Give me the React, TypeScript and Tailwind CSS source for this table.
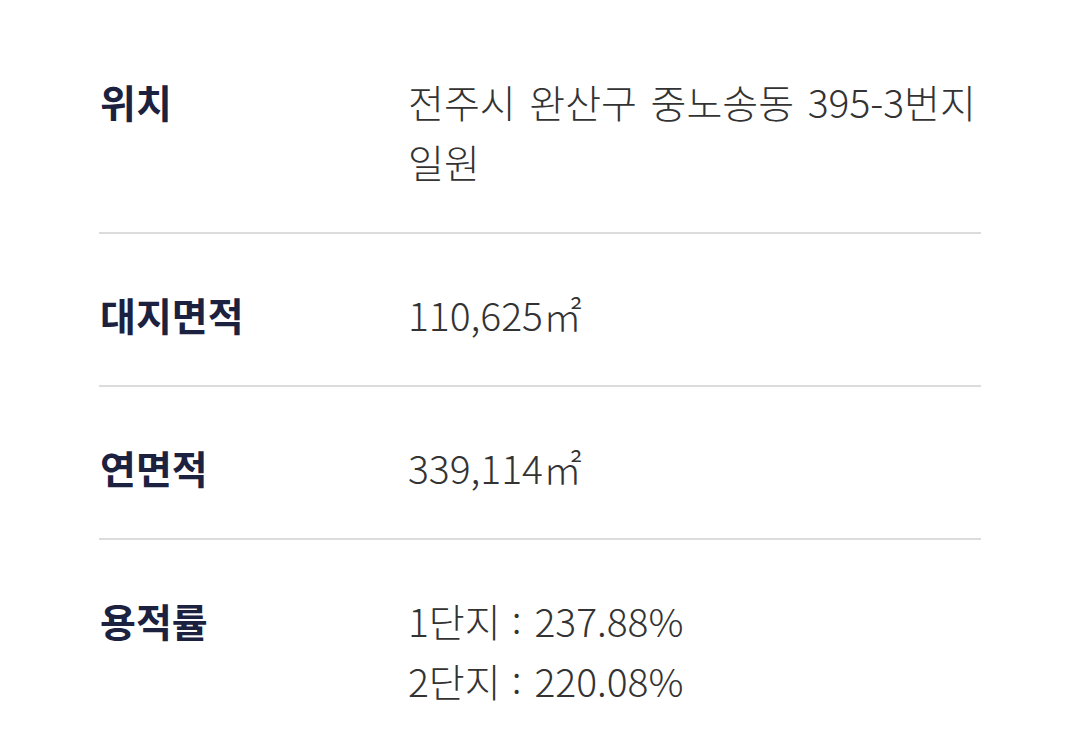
const Colon = () => <span className="ml-[11px] mr-[13px] inline-block -translate-y-[3px]">:</span>;

const rows: { label: string; lines: React.ReactNode[] }[] = [
  { label: "위치", lines: ["전주시 완산구 중노송동 395-3번지", "일원"] },
  { label: "대지면적", lines: ["110,625㎡"] },
  { label: "연면적", lines: ["339,114㎡"] },
  {
    label: "용적률",
    lines: [
      <>1단지<Colon />237.88%</>,
      <>2단지<Colon />220.08%</>,
    ],
  },
];

export default function App() {
  return (
    <div
      className="min-h-screen bg-white px-[99px] pt-[21px]"
      style={{ fontFamily: '"Noto Sans CJK KR", "Noto Sans", sans-serif' }}
    >
      {rows.map((row, i) => (
        <div
          key={row.label}
          className={`flex pt-[50px] pb-[41px] ${i < rows.length - 1 ? "border-b-2 border-[#dcdcdc]" : ""}`}
        >
          <div className="w-[309px] shrink-0 pl-px text-[39px] leading-[60px] font-bold text-[#1c2140]">
            {row.label}
          </div>
          <div className="text-[39px] leading-[60px] font-light text-[#333333] [word-spacing:5px]">
            {row.lines.map((l, j) => (
              <div key={j}>{l}</div>
            ))}
          </div>
        </div>
      ))}
    </div>
  );
}
